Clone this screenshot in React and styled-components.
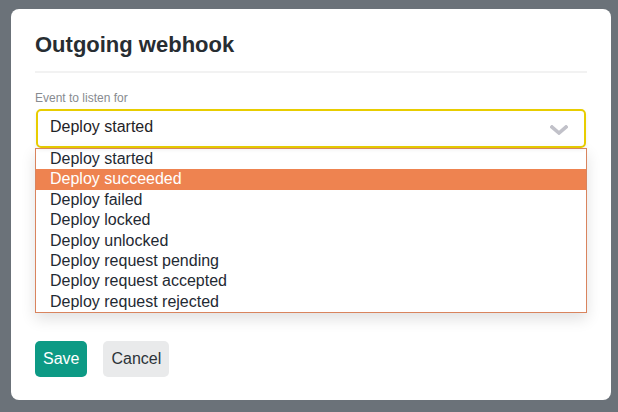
import React from 'react';
import styled, { createGlobalStyle } from 'styled-components';

const GlobalStyle = createGlobalStyle`
  html, body {
    margin: 0;
    padding: 0;
    background: #6b7279;
    font-family: 'Liberation Sans', Arial, sans-serif;
  }
`;

const events = [
  'Deploy started',
  'Deploy succeeded',
  'Deploy failed',
  'Deploy locked',
  'Deploy unlocked',
  'Deploy request pending',
  'Deploy request accepted',
  'Deploy request rejected',
];

const App = () => {
  return (
    <>
      <GlobalStyle />
      <Overlay>
        <Modal>
          <Title>Outgoing webhook</Title>
          <Divider />
          <Label>Event to listen for</Label>
          <SelectBox>
            <span>Deploy started</span>
            <svg width='18' height='10' viewBox='0 0 18 10'>
              <polyline
                points='2,2 9,8 16,2'
                fill='none'
                stroke='#c1c1c9'
                strokeWidth='3.6'
                strokeLinecap='square'
              />
            </svg>
          </SelectBox>
          <Options>
            {events.map((e) => (
              <Option key={e} $active={e === 'Deploy succeeded'}>
                {e}
              </Option>
            ))}
          </Options>
          <Actions>
            <Button $primary>Save</Button>
            <Button>Cancel</Button>
          </Actions>
        </Modal>
      </Overlay>
    </>
  );
};

export default App;

const Overlay = styled.div`
  width: 618px;
  height: 412px;
  padding: 9px 0 0 11px;
  box-sizing: border-box;
`;

const Modal = styled.div`
  width: 600px;
  height: 391px;
  box-sizing: border-box;
  background: #fff;
  border-radius: 8px;
  padding: 22px 24px 0 24px;
  display: flex;
  flex-direction: column;
`;

const Title = styled.h1`
  margin: 0;
  font-size: 22px;
  font-weight: bold;
  line-height: 28px;
  color: #272d32;
`;

const Divider = styled.div`
  height: 2px;
  background: #f2f2f2;
  margin: 12px 0 18px;
`;

const Label = styled.label`
  font-size: 12px;
  line-height: 14px;
  color: #878b90;
  margin-bottom: 4px;
`;

const SelectBox = styled.div`
  height: 39px;
  box-sizing: border-box;
  margin-left: 1px;
  width: 550px;
  border: 2px solid #e8cd00;
  border-radius: 5px;
  padding: 7px 16px 0 12px;
  display: flex;
  justify-content: space-between;
  align-items: flex-start;
  font-size: 16px;
  color: #1f2327;
  line-height: 18px;
  box-shadow: 0 2px 4px rgba(0, 0, 0, 0.06);

  svg {
    margin-top: 7px;
  }
`;

const Options = styled.div`
  width: 552px;
  box-sizing: border-box;
  border: 1px solid #d9845e;
  padding: 0;
  box-shadow: 0 6px 14px rgba(0, 0, 0, 0.12);
`;

const Option = styled.div`
  font-size: 16px;
  line-height: 18.4px;
  padding: 1px 14px;
  color: ${(p) => (p.$active ? '#fff' : '#1f2a33')};
  background: ${(p) => (p.$active ? '#ee8350' : 'transparent')};
`;

const Actions = styled.div`
  display: flex;
  gap: 16px;
  margin-top: 28px;
`;

const Button = styled.button`
  height: 36px;
  padding: 0 8px;
  border: none;
  border-radius: 5px;
  font-family: 'Liberation Sans', Arial, sans-serif;
  font-size: 16px;
  background: ${(p) => (p.$primary ? '#0d9a85' : '#e9eaeb')};
  color: ${(p) => (p.$primary ? '#fff' : '#2c3338')};
`;
